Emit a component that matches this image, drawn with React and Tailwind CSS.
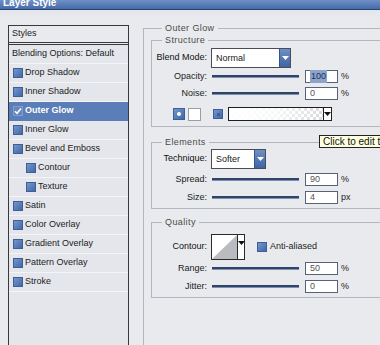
import React from 'react';

const styleRows = [
  { label: 'Drop Shadow' },
  { label: 'Inner Shadow' },
  { label: 'Outer Glow', active: true },
  { label: 'Inner Glow' },
  { label: 'Bevel and Emboss' },
  { label: 'Contour', indent: true },
  { label: 'Texture', indent: true },
  { label: 'Satin' },
  { label: 'Color Overlay' },
  { label: 'Gradient Overlay' },
  { label: 'Pattern Overlay' },
  { label: 'Stroke' },
];

const Check = ({ checked }) => (
  <span
    className={`flex h-[10px] w-[10px] flex-none items-center justify-center border ${
      checked ? 'border-[#7f9dcf] bg-[#6486bf]' : 'border-[#3d5f98] bg-linear-to-br from-[#7596cc] to-[#4268a7]'
    }`}
  >
    {checked && (
      <svg width="8" height="8" viewBox="0 0 8 8">
        <path d="M1 4.2 L3 6.3 L7 1.5" fill="none" stroke="#fff" strokeWidth="1.6" />
      </svg>
    )}
  </span>
);

const LeftPanel = () => (
  <div className="mt-[1px] h-[340px] w-[121px] flex-none border border-[#38393d] bg-[#e4e6eb]">
    <div className="flex h-[17px] items-center border-b border-[#38393d] bg-[#e9eaee] pl-[3px]">Styles</div>
    <div className="h-[1px] bg-[#e9eaee]" />
    <div className="flex h-[20px] items-center border-t border-b border-t-[#38393d] border-b-[#f3f4f6] pl-[3px]">
      Blending Options: Default
    </div>
    {styleRows.map((row) => (
      <div
        key={row.label}
        className={`flex h-[19px] items-center gap-[2px] border-b ${
          row.active ? 'border-[#5b7eb8] bg-[#5b7eb8] font-bold text-white' : 'border-[#f3f4f6]'
        } ${row.indent ? 'pl-[17px]' : 'pl-[4px]'}`}
      >
        <Check checked={row.active} />
        <span>{row.label}</span>
      </div>
    ))}
  </div>
);

const Input = ({ value, selected }) => (
  <div className="ml-[6px] flex h-[13px] w-[33px] items-center border border-[#56627c] bg-white pl-[4px] text-[#555]">
    <span className={selected ? 'bg-[#8ea3c8] px-[1px] text-[#14306a]' : ''}>{value}</span>
  </div>
);

const SliderRow = ({ label, value, unit, selected, className = '' }) => (
  <div className={`flex h-[13px] items-center ${className}`}>
    <span className="w-[55px] text-right text-[#1b1b1b]">{label}</span>
    <div className="ml-[5px] h-[3px] w-[87px] border-b border-[#7f8fae] bg-[#2f4468]" />
    <Input value={value} selected={selected} />
    <span className="ml-[3px] text-[#222]">{unit}</span>
  </div>
);

const Arrow = ({ color }) => (
  <svg width="7" height="4" viewBox="0 0 7 4">
    <path d="M0 0 H7 L3.5 4 Z" fill={color} />
  </svg>
);

const Select = ({ value, width }) => (
  <div className={`ml-[4px] flex h-[20px] ${width} border border-[#4a4d55] bg-white`}>
    <span className="flex flex-1 items-center pl-[4px] pt-[2px] text-[#222]">{value}</span>
    <span className="flex w-[11px] items-center justify-center border-l border-[#34558d] bg-linear-to-b from-[#6f90c6] to-[#3f64a3]">
      <Arrow color="#fff" />
    </span>
  </div>
);

const Legend = ({ children, className = '' }) => (
  <legend className={`px-[3px] leading-[10px] tracking-[0.4px] text-[#4a4a4a] ${className}`}>{children}</legend>
);

const RightPanel = () => (
  <fieldset className="-mt-[1px] ml-[14px] h-[345px] w-[262px] flex-none border border-[#b3b6be] pl-[7px]">
    <Legend className="ml-[11px]">Outer Glow</Legend>

    <fieldset className="mt-[2px] border border-[#b3b6be] pb-[5px]">
      <Legend className="ml-[10px]">Structure</Legend>
      <div className="mt-[3px] flex h-[20px] items-center">
        <span className="w-[55px] text-right text-[#111]">Blend Mode:</span>
        <Select value="Normal" width="w-[80px]" />
      </div>
      <SliderRow label="Opacity:" value="100" unit="%" selected className="mt-[2px]" />
      <SliderRow label="Noise:" value="0" unit="%" className="mt-[4px]" />
      <div className="mt-[7px] ml-[21px] flex h-[14px] items-center">
        <span className="flex h-[12px] w-[12px] items-center justify-center border border-[#3d5f98] bg-linear-to-br from-[#7596cc] to-[#4268a7]">
          <span className="h-[4px] w-[4px] rounded-full bg-white" />
        </span>
        <span className="ml-[3px] h-[13px] w-[13px] border border-[#9a9da5] bg-white" />
        <span className="ml-[12px] flex h-[10px] w-[10px] items-center justify-center border border-[#3d5f98] bg-linear-to-br from-[#7596cc] to-[#4268a7]">
          <span className="h-[3px] w-[3px] rounded-full bg-[#3a5a92]" />
        </span>
        <span className="ml-[5px] flex h-[14px] w-[104px] border border-[#1e1e1e] bg-white">
          <span className="relative flex-1 bg-[repeating-conic-gradient(#d7d9de_0_25%,#ffffff_0_50%)] bg-[length:6px_6px]">
            <span className="absolute inset-0 bg-linear-to-r from-white via-white/80 to-white/0" />
          </span>
          <span className="flex w-[8px] items-center justify-center border-l border-[#1e1e1e] bg-white">
            <Arrow color="#111" />
          </span>
        </span>
      </div>
    </fieldset>

    <fieldset className="mt-[10px] border border-[#b3b6be] pb-[4px]">
      <Legend className="ml-[10px]">Elements</Legend>
      <div className="mt-[2px] flex h-[20px] items-center">
        <span className="w-[55px] text-right text-[#111]">Technique:</span>
        <Select value="Softer" width="w-[55px]" />
      </div>
      <SliderRow label="Spread:" value="90" unit="%" className="mt-[4px]" />
      <SliderRow label="Size:" value="4" unit="px" className="mt-[5px]" />
    </fieldset>

    <fieldset className="mt-[8px] border border-[#b3b6be] pb-[4px]">
      <Legend className="ml-[10px]">Quality</Legend>
      <div className="mt-[7px] flex h-[26px] items-center">
        <span className="w-[55px] text-right text-[#111]">Contour:</span>
        <span className="ml-[4px] flex h-[26px] w-[34px] border border-[#2a2a2a] bg-white">
          <svg width="25" height="24" viewBox="0 0 25 24" className="flex-none">
            <polygon points="0,24 25,0 25,24" fill="#b9bbc0" />
          </svg>
          <span className="flex flex-1 items-start justify-center border-l border-[#2a2a2a] pt-[6px]">
            <Arrow color="#111" />
          </span>
        </span>
        <span className="ml-[12px]">
          <Check />
        </span>
        <span className="ml-[3px] text-[#1b1b1b]">Anti-aliased</span>
      </div>
      <SliderRow label="Range:" value="50" unit="%" className="mt-[2px]" />
      <SliderRow label="Jitter:" value="0" unit="%" className="mt-[5px]" />
    </fieldset>
  </fieldset>
);

export default function App() {
  return (
    <div className="relative flex h-[345px] w-[380px] flex-col overflow-hidden bg-[#e9eaee] font-['Liberation_Sans',Arial,sans-serif] text-[9px] text-[#1b1b1b]">
      <div className="h-[10px] flex-none overflow-hidden border-b border-[#2c4470] bg-linear-to-b from-[#6f90c6] to-[#456ba9]">
        <div className="-mt-[2px] pl-[3px] text-[10px] font-bold leading-[10px] text-white">Layer Style</div>
      </div>
      <div className="flex min-h-0 flex-1 bg-linear-to-b from-[#e2e6ec] to-[#e9eaee] to-[8px] pt-[14px] pl-[8px]">
        <LeftPanel />
        <RightPanel />
      </div>
      <div className="absolute left-[319px] top-[135px] whitespace-nowrap border border-[#222] bg-[#ffffe1] px-[3px] text-[10px] leading-[11px] text-[#111]">
        Click to edit the gradient
      </div>
    </div>
  );
}
